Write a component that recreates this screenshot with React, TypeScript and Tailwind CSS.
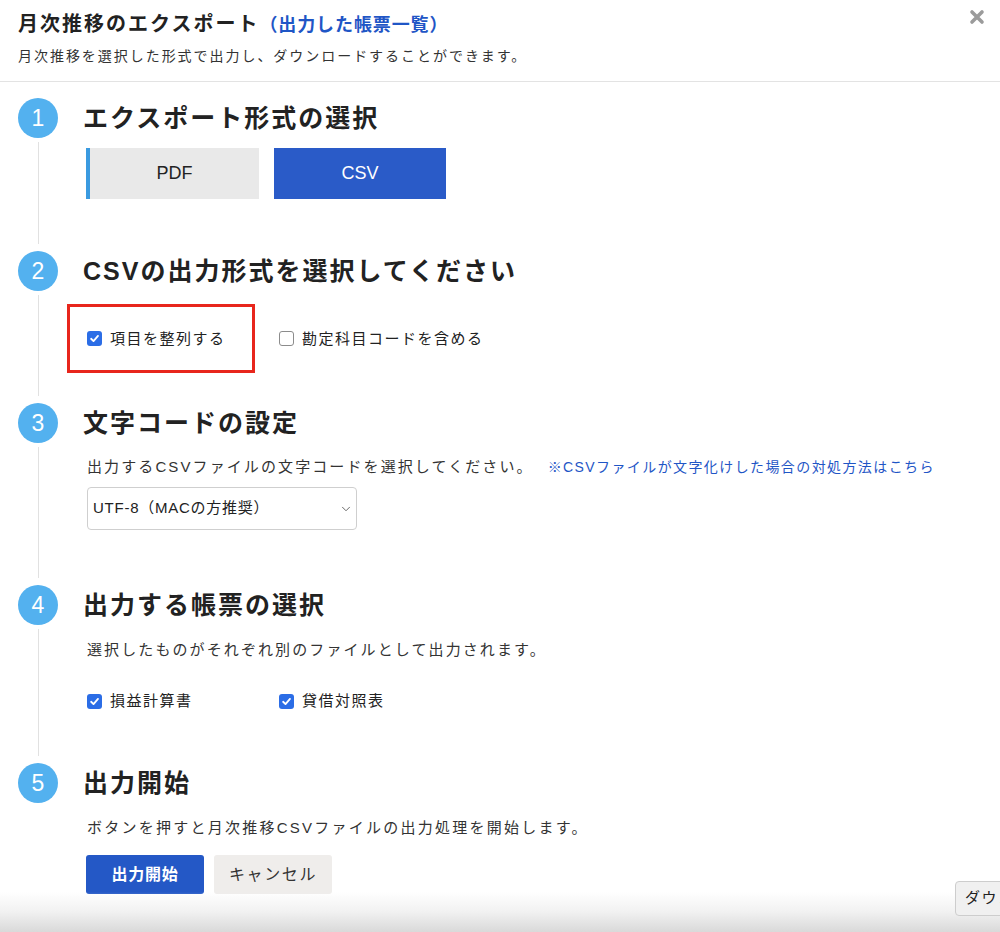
import { ChevronDown } from "lucide-react";
import type { ReactNode } from "react";

function Check({ checked }: { checked: boolean }) {
  if (!checked) {
    return <span className="h-[15px] w-[15px] shrink-0 rounded-[3px] border border-[#8c8c8c] bg-white" />;
  }
  return (
    <span className="flex h-[15px] w-[15px] shrink-0 items-center justify-center rounded-[3px] bg-[#2b6de6]">
      <svg viewBox="0 0 12 12" className="h-[11px] w-[11px]">
        <path d="M2.3 6.3 L4.9 8.8 L9.8 3.2" fill="none" stroke="white" strokeWidth="2" strokeLinecap="round" strokeLinejoin="round" />
      </svg>
    </span>
  );
}

function CheckItem({ label, checked }: { label: string; checked: boolean }) {
  return (
    <label className="flex items-center gap-2 text-[15px] leading-6 tracking-[0.1em] text-[#222]">
      <Check checked={checked} />
      {label}
    </label>
  );
}

function Step({ num, title, last, children }: { num: number; title: string; last?: boolean; children: ReactNode }) {
  return (
    <div className="flex">
      <div className="flex w-10 shrink-0 flex-col items-center">
        <div className="flex h-10 w-10 items-center justify-center rounded-full bg-[#53b1ef] text-[23px] font-light text-white">
          {num}
        </div>
        {!last && <div className="mt-1 mb-[7px] w-px flex-1 bg-[#e1e1e1]" />}
      </div>
      <div className="ml-[25px] flex-1">
        <h2 className="text-[25px] font-bold leading-10 tracking-[0.08em] text-[#222]">{title}</h2>
        {children}
      </div>
    </div>
  );
}

export default function App() {
  return (
    <div className="relative h-[932px] w-[1000px] overflow-hidden bg-white font-[Liberation_Sans,Noto_Sans_CJK_JP,sans-serif] text-[#222]">
      {/* header */}
      <div className="border-b border-[#e3e3e3] px-[18px] pt-[8px] pb-[13px]">
        <div className="flex items-start justify-between">
          <h1 className="text-[20px] font-bold leading-8 tracking-[0.1em] text-[#222]">
            月次推移のエクスポート
            <span className="text-[18px] tracking-[0.05em] text-[#1f56c6]">（出力した帳票一覧）</span>
          </h1>
          <svg viewBox="0 0 16 16" className="mt-[1px] mr-[-3px] h-[16px] w-[16px]">
            <path d="M3 3 L13 13 M13 3 L3 13" stroke="#9b9b9b" strokeWidth="3.6" strokeLinecap="round" />
          </svg>
        </div>
        <p className="mt-[3px] text-[14px] leading-6 tracking-[0.14em] text-[#333]">
          月次推移を選択した形式で出力し、ダウンロードすることができます。
        </p>
      </div>

      <div className="pt-[16px] pl-[18px]">
        <Step num={1} title="エクスポート形式の選択">
          <div className="mt-[10px] flex gap-[15px] pb-[52px] pl-[3px]">
            <button className="h-[51px] w-[173px] border-l-4 border-[#3a9ae0] bg-[#e9e9e9] text-[18px] text-[#222]">PDF</button>
            <button className="h-[51px] w-[172px] bg-[#2a5bc8] text-[18px] text-white">CSV</button>
          </div>
        </Step>

        <Step num={2} title="CSVの出力形式を選択してください">
          <div className="mt-[13px] flex items-center pb-[30px]">
            <div className="-ml-[16px] flex h-[69px] w-[188px] items-center border-[3px] border-[#e8261c] pl-[17px]">
              <CheckItem label="項目を整列する" checked />
            </div>
            <div className="ml-[24px]">
              <CheckItem label="勘定科目コードを含める" checked={false} />
            </div>
          </div>
        </Step>

        <Step num={3} title="文字コードの設定">
          <div className="pb-[55px] pl-[4px]">
            <div className="mt-[12px] flex items-center leading-6">
              <p className="text-[15px] tracking-[0.14em] text-[#333]">出力するCSVファイルの文字コードを選択してください。</p>
              <a className="ml-[14px] text-[14px] tracking-[0.1em] text-[#1f56c6]">※CSVファイルが文字化けした場合の対処方法はこちら</a>
            </div>
            <div className="mt-[8px] flex h-[43px] w-[270px] items-center justify-between rounded-[4px] border border-[#cfcfcf] bg-white pr-[3px] pl-[5px]">
              <span className="text-[15px] tracking-[0.05em] text-[#222]">UTF-8（MACの方推奨）</span>
              <ChevronDown className="h-[14px] w-[14px] text-[#555]" strokeWidth={1.5} />
            </div>
          </div>
        </Step>

        <Step num={4} title="出力する帳票の選択">
          <div className="pb-[50px] pl-[4px]">
            <p className="mt-[13px] text-[15px] leading-6 tracking-[0.14em] text-[#333]">
              選択したものがそれぞれ別のファイルとして出力されます。
            </p>
            <div className="mt-[27px] flex">
              <div className="w-[192px]">
                <CheckItem label="損益計算書" checked />
              </div>
              <CheckItem label="貸借対照表" checked />
            </div>
          </div>
        </Step>

        <Step num={5} title="出力開始" last>
          <div className="pl-[3px]">
            <p className="mt-[13px] pl-[1px] text-[15px] leading-6 tracking-[0.15em] text-[#333]">
              ボタンを押すと月次推移CSVファイルの出力処理を開始します。
            </p>
            <div className="mt-[15px] flex gap-[10px]">
              <button className="h-[39px] w-[118px] rounded-[3px] bg-[#2458c6] text-[16px] font-bold tracking-[0.05em] text-white">出力開始</button>
              <button className="h-[39px] w-[118px] rounded-[3px] bg-[#efedeb] text-[16px] tracking-[0.1em] text-[#333]">キャンセル</button>
            </div>
          </div>
        </Step>
      </div>

      {/* footer fade */}
      <div className="absolute inset-x-0 bottom-0 h-[40px] bg-gradient-to-b from-white/0 via-[#f1f1f1] to-[#d9d9d9]" />
      <div className="absolute top-[881px] left-[955px] flex h-[35px] w-[100px] items-center whitespace-nowrap rounded-[4px] border border-[#cdcdcd] bg-[#f0f0f0] pl-[9px] text-[15px] tracking-[0.1em] text-[#222]">
        ダウンロード
      </div>
    </div>
  );
}
